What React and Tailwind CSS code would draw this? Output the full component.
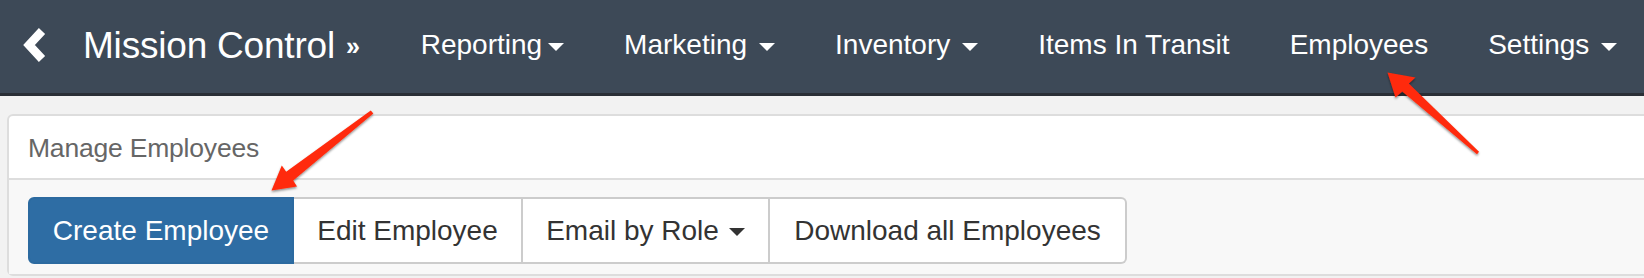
import React from 'react';

const navItems = [
  { label: 'Reporting', caret: true, tight: true },
  { label: 'Marketing', caret: true },
  { label: 'Inventory', caret: true },
  { label: 'Items In Transit' },
  { label: 'Employees' },
  { label: 'Settings', caret: true },
];

function Caret({ className = '' }) {
  return (
    <span
      className={`inline-block shrink-0 w-0 h-0 border-t-[8px] border-x-[8px] border-x-transparent align-middle ${className}`}
    />
  );
}

export default function App() {
  return (
    <div className="relative w-[1644px] h-[278px] overflow-hidden bg-[#f2f2f2] font-['Liberation_Sans',Arial,sans-serif] whitespace-nowrap">
      {/* top bar */}
      <nav className="flex items-center h-[96px] bg-[#3d4957] border-b-[3px] border-[#2a2f36] text-white">
        <svg width="30" height="40" viewBox="0 0 30 40" className="shrink-0 ml-[20px] mt-[-4px]">
          <polyline points="22,6 9,20 22,34" fill="none" stroke="#fff" strokeWidth="8.5" strokeLinejoin="miter" />
        </svg>
        <div className="shrink-0 ml-[33px] flex items-center text-[37px] leading-none tracking-[-0.2px] mt-[-3px]">
          Mission Control
          <span className="ml-[11px] text-[25px] font-bold mt-[3px]">»</span>
        </div>
        <ul className="shrink-0 flex items-center ml-[31px] text-[28px] leading-none mt-[-3px]">
          {navItems.map((item) => (
            <li key={item.label} className="shrink-0 px-[30px] flex items-center">
              {item.label}
              {item.caret && (
                <Caret className={`border-t-white ${item.tight ? 'ml-[6px]' : 'ml-[12px]'} mt-[3px]`} />
              )}
            </li>
          ))}
        </ul>
      </nav>

      {/* panel */}
      <div className="pl-[7px] pt-[18px]">
        <div className="w-[1660px] border-2 border-[#dddddd] rounded-[6px] bg-white">
          <div className="h-[62px] flex items-center pl-[19px] pt-[3px] text-[26.5px] text-[#666] tracking-[-0.2px]">
            Manage Employees
          </div>
          <div className="bg-[#f8f8f8] border-t-2 border-[#dddddd] pt-[17px] pb-[10px] pl-[19px]">
            <div className="flex h-[67px] text-[28px] leading-none">
              <button className="w-[266px] flex items-center justify-center bg-[#2e6da4] text-white border-2 border-[#2c6aa0] rounded-l-[6px]">
                Create Employee
              </button>
              <button className="w-[229px] flex items-center justify-center bg-white text-[#333] border-2 border-l-0 border-[#cccccc]">
                Edit Employee
              </button>
              <button className="w-[247px] flex items-center justify-center bg-white text-[#333] border-2 border-l-0 border-[#cccccc]">
                Email by Role
                <Caret className="border-t-[#333] ml-[10px] mt-[2px]" />
              </button>
              <button className="w-[357px] flex items-center justify-center bg-white text-[#333] border-2 border-l-0 border-[#cccccc] rounded-r-[6px]">
                Download all Employees
              </button>
            </div>
          </div>
        </div>
      </div>

      {/* annotation arrows */}
      <svg className="absolute inset-0 pointer-events-none" width="1644" height="278">
        <defs>
          <filter id="sh" x="-20%" y="-20%" width="140%" height="140%">
            <feDropShadow dx="0" dy="1.5" stdDeviation="1.2" floodColor="#000" floodOpacity="0.45" />
          </filter>
        </defs>
        <polygon
          filter="url(#sh)"
          fill="#ff2a0a"
          points="370.8,110.4 373.3,113.6 293.2,180.4 297,186.5 271.5,190.5 281.8,165.5 286.2,171.8"
        />
        <polygon
          filter="url(#sh)"
          fill="#ff2a0a"
          points="1479,151.8 1408.8,83.6 1415.5,77.5 1387.5,72.5 1395.5,97.5 1402.2,91.4 1477,154.2"
        />
      </svg>
    </div>
  );
}
